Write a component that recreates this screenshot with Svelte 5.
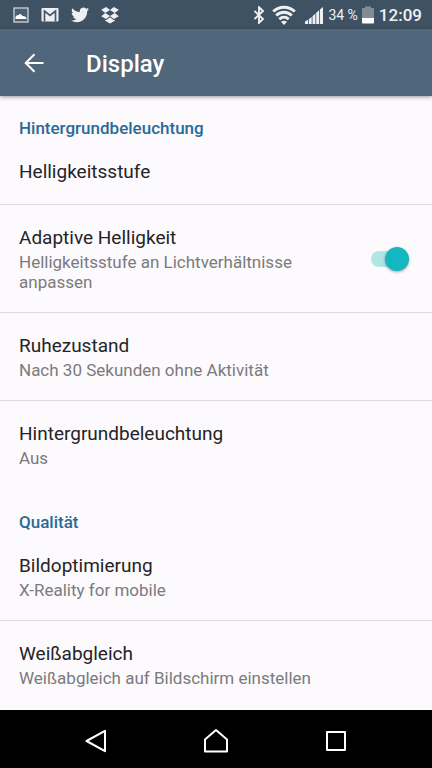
<script>
  let adaptive = $state(true);

  const sections = [
    {
      title: "Hintergrundbeleuchtung",
      items: [
        { label: "Helligkeitsstufe" },
        {
          label: "Adaptive Helligkeit",
          summary: "Helligkeitsstufe an Lichtverhältnisse anpassen",
          toggle: true,
        },
        { label: "Ruhezustand", summary: "Nach 30 Sekunden ohne Aktivität" },
        { label: "Hintergrundbeleuchtung", summary: "Aus" },
      ],
    },
    {
      title: "Qualität",
      items: [
        { label: "Bildoptimierung", summary: "X-Reality for mobile" },
        {
          label: "Weißabgleich",
          summary: "Weißabgleich auf Bildschirm einstellen",
        },
      ],
    },
  ];
</script>

{#snippet text(item)}
  <span class="text">
    <span class="label">{item.label}</span>
    {#if item.summary}
      <span class="summary">{item.summary}</span>
    {/if}
  </span>
{/snippet}

<div class="screen">
  <div class="status">
    <div class="notifications">
      <svg width="16" height="16" viewBox="0 0 16 16">
        <rect x="1" y="1" width="14" height="14" fill="#4d6071" stroke="#c3ccd4" stroke-width="1.4" />
        <path d="M2.500 12V9.800Q4 7.500 5.500 8.200q1-1.800 2.500-.8 1.200.8 1.500 1.800 2-.8 4 1.500V12z" fill="#fff" />
      </svg>
      <svg width="18" height="16" viewBox="0 0 18 16">
        <rect x="0.500" y="1" width="17" height="13.500" rx="1.200" fill="#eef1f4" />
        <path d="M3.500 14.500V4L9 8.500 14.500 4v10.500" fill="none" stroke="#43566a" stroke-width="1.700" />
      </svg>
      <svg width="18" height="16" viewBox="0 0 24 20">
        <path
          d="M23.950 2.370a10 10 0 0 1-2.820.770 4.960 4.960 0 0 0 2.160-2.720c-.950.550-2 .950-3.130 1.180a4.920 4.920 0 0 0-8.380 4.480C7.690 5.900 4.070 3.930 1.640.960a4.820 4.820 0 0 0-.670 2.480c0 1.710.870 3.210 2.190 4.100a4.900 4.900 0 0 1-2.230-.620v.060a4.920 4.920 0 0 0 3.950 4.830 5 5 0 0 1-2.210.080 4.940 4.940 0 0 0 4.600 3.420A9.870 9.870 0 0 1 0 17.340 13.990 13.990 0 0 0 7.550 19.550c9.050 0 14-7.500 14-13.980l-.020-.640a9.940 9.940 0 0 0 2.420-2.560z"
          fill="#eef1f4"
        />
      </svg>
      <svg width="18" height="18" viewBox="0 0 18 18">
        <path
          d="M5.200 1 9 4 4.300 7 0.200 3.800zM12.800 1 17.800 3.800 13.700 7 9 4zM4.300 7 9 10 5.200 13 0.200 10.200zM13.700 7 17.800 10.200 12.800 13 9 10zM4.200 13.500 5.200 14.200 9 11.200l3.800 3 1-.7v1.200L9 17.600l-4.800-2.900z"
          fill="#eef1f4"
        />
      </svg>
    </div>
    <div class="system">
      <svg width="12" height="18" viewBox="0 0 12 18">
        <path d="M1.500 5 10 13l-4 3.800V1.200L10 5l-8.500 8" fill="none" stroke="#eef1f4" stroke-width="1.900" />
      </svg>
      <svg class="wifi" width="24" height="20" viewBox="0 0 24 20">
        <g fill="none" stroke="#eef1f4" stroke-width="2.900">
          <path d="M1.200 6.500C7.200 0.800 16.800 0.800 22.800 6.500" />
          <path d="M4.200 10.500c4.500-4.300 11.100-4.300 15.600 0" />
          <path d="M7.300 14.200c2.800-2.600 6.600-2.600 9.400 0" />
        </g>
        <path d="M12 20 9 16.700c1.700-1.300 4.300-1.300 6 0z" fill="#eef1f4" />
      </svg>
      <svg class="signal" width="18" height="18" viewBox="0 0 18 18">
        <path
          d="M0 15.500 3 13.700V18H0zM3.800 13.200 6.700 11v7H3.800zM7.500 10.200 10.400 7.500V18H7.500zM11.200 6.800 14.100 4.200V18h-2.900zM14.900 3.500 18 1v17h-3.100z"
          fill="#eef1f4"
        />
      </svg>
      <span class="percent">34 %</span>
      <svg class="battery" width="12" height="18" viewBox="0 0 12 18">
        <path d="M3 0.500h6V2h2q1 0 1 1v9H0V3q0-1 1-1h2z" fill="#7f8d9b" />
        <path d="M0 12h12v4.500q0 1-1 1H1q-1 0-1-1z" fill="#fff" />
      </svg>
      <span class="clock">12:09</span>
    </div>
  </div>

  <header>
    <button class="back" aria-label="Zurück">
      <svg width="20" height="20" viewBox="0 0 20 20">
        <path d="M19.500 10H2M10.500 1.200 1.700 10l8.800 8.800" fill="none" stroke="#fff" stroke-width="2" />
      </svg>
    </button>
    <h1>Display</h1>
  </header>

  <main>
    {#each sections as section}
      <section>
        <h2>{section.title}</h2>
        <ul>
          {#each section.items as item}
            <li>
              {#if item.toggle}
                <label class="row">
                  {@render text(item)}
                  <input type="checkbox" role="switch" bind:checked={adaptive} />
                </label>
              {:else}
                <button class="row">{@render text(item)}</button>
              {/if}
            </li>
          {/each}
        </ul>
      </section>
    {/each}
  </main>

  <nav>
    <button aria-label="Zurück">
      <svg width="24" height="24" viewBox="0 0 24 24">
        <path d="M2.500 12 21 1.800v20.400z" fill="none" stroke="#fff" stroke-width="2" stroke-linejoin="round" />
      </svg>
    </button>
    <button aria-label="Startseite">
      <svg width="24" height="24" viewBox="0 0 24 24">
        <path d="M1 22.500V10.500L12 1l11 9.500v12z" fill="none" stroke="#fff" stroke-width="2" stroke-linejoin="round" />
      </svg>
    </button>
    <button aria-label="Übersicht">
      <svg width="24" height="24" viewBox="0 0 24 24">
        <rect x="3" y="3" width="18" height="18" fill="none" stroke="#fff" stroke-width="2" stroke-linejoin="round" />
      </svg>
    </button>
  </nav>
</div>

<style>
  :global(body) {
    background: #fcfafd;
  }

  .screen {
    display: flex;
    flex-direction: column;
    min-height: 100vh;
    font-family: Roboto, "Liberation Sans", sans-serif;
    color: #242426;
  }

  svg {
    display: block;
    flex: none;
  }

  button {
    border: 0;
    background: none;
    padding: 0;
    font: inherit;
    color: inherit;
    cursor: pointer;
  }

  .status {
    display: flex;
    justify-content: space-between;
    align-items: center;
    height: 29px;
    padding: 0 10px 0 13px;
    background: #3f5263;
    color: #eef1f4;
  }

  .notifications {
    display: flex;
    align-items: center;
    gap: 12px;
  }

  .system {
    display: flex;
    align-items: center;
  }

  .wifi {
    margin-left: 7px;
  }

  .signal {
    margin: 0 5px 0 9px;
  }

  .percent {
    font-size: 14px;
  }

  .battery {
    margin: 0 5px 0 4px;
  }

  .clock {
    font-size: 17px;
    font-weight: 500;
  }

  header {
    position: relative;
    display: flex;
    align-items: center;
    height: 67px;
    padding: 0 20px;
    background: #50667b;
    color: #fff;
    box-shadow: 0 1px 4px rgba(0, 0, 0, 0.4);
  }

  .back {
    padding: 4px;
  }

  h1 {
    margin: 0 0 0 38px;
    padding-top: 2px;
    font-size: 24px;
    font-weight: 500;
  }

  main {
    flex: 1;
  }

  section + section {
    margin-top: 2px;
  }

  h2 {
    margin: 0;
    padding: 22px 19px 1px;
    font-size: 17px;
    line-height: 20px;
    font-weight: 500;
    color: #2a6a96;
  }

  ul {
    list-style: none;
    margin: 0;
    padding: 0;
  }

  li + li {
    border-top: 1px solid #dcdadd;
  }

  .row {
    display: flex;
    align-items: center;
    justify-content: space-between;
    box-sizing: border-box;
    width: 100%;
    padding: 21px 23px 20px 19px;
    text-align: left;
    cursor: pointer;
  }

  .text {
    display: flex;
    flex-direction: column;
    gap: 2px;
  }

  .label {
    font-size: 19px;
    line-height: 24px;
  }

  .summary {
    font-size: 17px;
    line-height: 20px;
    color: #7b7a7d;
  }

  input {
    position: relative;
    flex: none;
    appearance: none;
    width: 38px;
    height: 16px;
    margin: 0 0 0 60px;
    border-radius: 8px;
    background: #c6c6c9;
    cursor: pointer;
  }

  input::before {
    content: "";
    position: absolute;
    top: -4px;
    left: 0;
    width: 24px;
    height: 24px;
    border-radius: 50%;
    background: #f4f4f5;
    box-shadow: 0 1px 3px rgba(0, 0, 0, 0.35);
    transition: left 0.15s;
  }

  input:checked {
    background: #b0e7e6;
  }

  input:checked::before {
    left: 14px;
    background: #13b7bf;
  }

  nav {
    display: flex;
    justify-content: space-around;
    align-items: center;
    box-sizing: border-box;
    height: 58px;
    padding: 4px 36px 0;
    background: #000;
  }

  nav button {
    padding: 8px;
  }
</style>
